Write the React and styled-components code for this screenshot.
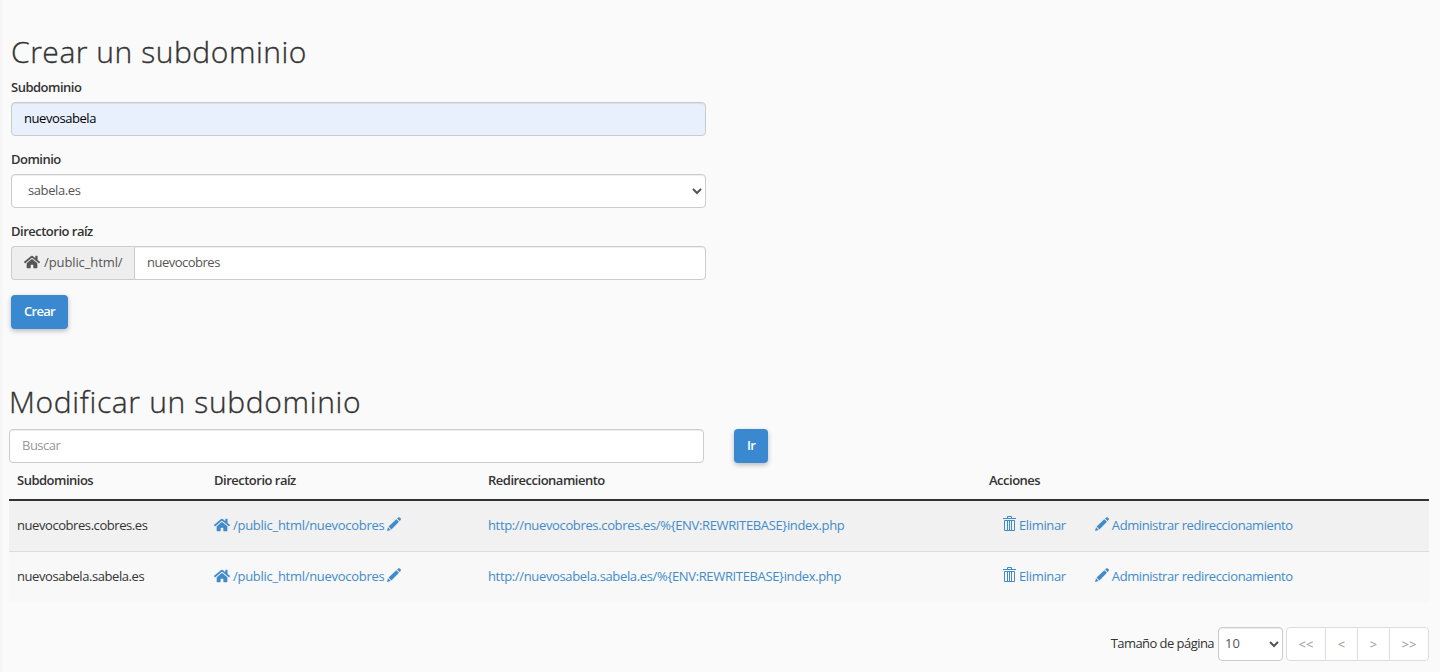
import React from 'react';
import styled, { createGlobalStyle, css } from 'styled-components';
import { FaHome } from 'react-icons/fa';

const Global = createGlobalStyle`
  *, *::before, *::after { box-sizing: border-box; }
  body {
    margin: 0;
    background: #fafafa;
    color: #333;
    font-family: 'Open Sans', 'Noto Sans', sans-serif;
    font-size: 13px;
    line-height: 20px;
    overflow: hidden;
  }
`;

const Page = styled.main`
  min-height: 672px;
  padding-top: 35px;
  box-shadow: inset 5px 0 4px -4px #f1f1f1;
`;

const CreateSection = styled.section`
  height: 350px;
  padding-left: 11px;
`;

const ManageSection = styled.section`
  width: 1420px;
  margin-left: 9px;
`;

const Heading = styled.h2`
  margin: 0;
  font-size: 30px;
  font-weight: 300;
  line-height: 34px;
  letter-spacing: ${(p) => p.$spacing}px;
  -webkit-text-stroke: 0.35px #333;
`;

const T = styled.span`
  letter-spacing: ${(p) => p.$ls ?? -0.43}px;
  white-space: nowrap;
`;

const Label = styled.label`
  display: block;
  height: 20px;
  font-weight: 600;
  white-space: nowrap;
  letter-spacing: -0.5px;
`;

const Field = styled.div`
  width: 695px;
  height: 72px;
  padding-top: 8px;

  ${Label} { margin-bottom: 5px; }
`;

const control = css`
  height: 34px;
  border: 1px solid #ccc;
  border-radius: 4px;
  background: #fff;
  color: #555;
  font: inherit;
  box-shadow: inset 0 1px 1px rgba(0, 0, 0, 0.075);
  outline: none;
`;

const Input = styled.input`
  ${control}
  display: block;
  width: 695px;
  padding: 5px 12px 7px;
  letter-spacing: ${(p) => p.$ls ?? -0.43}px;
  ${(p) => p.$filled && 'background: #e8f0fe; color: #000;'}

  &::placeholder { color: #999; opacity: 1; }
`;

const Select = styled.select`
  ${control}
  width: ${(p) => p.$width}px;
  padding: ${(p) => p.$padding};
  letter-spacing: ${(p) => p.$ls ?? -0.4}px;
`;

const InputGroup = styled.div`
  display: flex;

  ${Input} {
    flex: 1;
    min-width: 0;
    border-radius: 0 4px 4px 0;
  }
`;

const Addon = styled.span`
  display: flex;
  align-items: center;
  gap: 4px;
  width: 123px;
  height: 34px;
  padding: 0 0 2px 12px;
  border: 1px solid #ccc;
  border-right: 0;
  border-radius: 4px 0 0 4px;
  background: #eee;
  color: #555;
`;

const Button = styled.button`
  width: ${(p) => p.$width}px;
  height: 34px;
  padding: 0 0 2px;
  border: 0;
  border-radius: 4px;
  background: #3a89d0;
  color: #fff;
  font: inherit;
  font-weight: 600;
  letter-spacing: -0.7px;
  box-shadow: 0 2px 5px rgba(0, 0, 0, 0.26);
`;

const CreateButton = styled(Button)`
  display: block;
  margin-top: 10px;
`;

const SearchRow = styled.div`
  display: flex;
  gap: 30px;
  margin-top: 10px;
`;

const Table = styled.div`
  height: 140px;
`;

const Row = styled.div`
  display: grid;
  grid-template-columns: 197px 274px 501px 1fr;
  align-items: center;
  height: ${(p) => p.$height}px;
  padding: 0 8px 2px;
  background: ${(p) => p.$bg || 'transparent'};
  border-bottom: ${(p) => p.$border || '0'};
`;

const Link = styled.a`
  display: inline-flex;
  align-items: center;
  gap: 3px;
  color: #428bca;
  white-space: nowrap;
`;

const Actions = styled.div`
  display: flex;
  gap: 29px;
  padding-left: 14px;
`;

const Icon = styled.svg`
  display: block;
  flex: none;
  margin-top: -3px;
`;

const Pager = styled.div`
  display: flex;
  justify-content: flex-end;
  align-items: center;
  margin-top: 24px;
`;

const PageSize = styled.label`
  display: flex;
  align-items: center;
  gap: 4px;
  margin-right: 3px;

  ${T} { padding-bottom: 2px; }
`;

const PageButtons = styled.div`
  display: flex;
`;

const PageButton = styled.button`
  width: ${(p) => p.$width}px;
  height: 34px;
  margin-left: -1px;
  padding: 0;
  border: 1px solid #ddd;
  background: #fff;
  color: #999;
  font: inherit;

  &:first-child { margin-left: 0; border-radius: 4px 0 0 4px; }
  &:last-child { border-radius: 0 4px 4px 0; }
`;

const Pencil = () => (
  <Icon width="14" height="14" viewBox="0 0 14 14" fill="currentColor">
    <path d="M0 14 1 10.3 3.7 13Z" />
    <path d="M1.6 9.5 9.3 2.2 12 4.8 4.4 12.4Z" />
    <path d="M10 1.5 11.2.4Q12-.2 12.9.6L13.6 1.3Q14.3 2.1 13.6 2.9L12.6 4.1Z" />
  </Icon>
);

const Trash = () => (
  <Icon width="13" height="15" viewBox="0 0 13 15" fill="none" stroke="currentColor">
    <path d="M0 2.5H13M4.5 2V.5H8.5V2M1.5 4.5H11.5V14.5H1.5ZM4.5 5V14M6.5 5V14M8.5 5V14" />
  </Icon>
);

const rows = [
  { name: 'nuevocobres.cobres.es', bg: '#f1f1f1', border: '1px solid #ddd', height: 51 },
  { name: 'nuevosabela.sabela.es', bg: '#f8f8f8', height: 50 },
];

export default function App() {
  return (
    <>
      <Global />
      <Page>
        <CreateSection>
          <Heading $spacing={0.54}>Crear un subdominio</Heading>
          <Field>
            <Label>Subdominio</Label>
            <Input $filled defaultValue="nuevosabela" />
          </Field>
          <Field>
            <Label>Dominio</Label>
            <Select $width={695} $padding="5px 12px 7px"><option>sabela.es</option></Select>
          </Field>
          <Field>
            <Label>Directorio raíz</Label>
            <InputGroup>
              <Addon><FaHome size={16} /><T $ls={-0.1}>/public_html/</T></Addon>
              <Input $ls={-0.5} defaultValue="nuevocobres" />
            </InputGroup>
          </Field>
          <CreateButton $width={57}>Crear</CreateButton>
        </CreateSection>
        <ManageSection>
          <Heading $spacing={0.66}>Modificar un subdominio</Heading>
          <SearchRow>
            <Input $ls={-0.5} placeholder="Buscar" />
            <Button $width={34}>Ir</Button>
          </SearchRow>
          <Table>
            <Row $height={38} $border="2px solid #333">
              <Label>Subdominios</Label>
              <Label>Directorio raíz</Label>
              <Label>Redireccionamiento</Label>
              <Label>Acciones</Label>
            </Row>
            {rows.map((r) => (
              <Row key={r.name} $height={r.height} $bg={r.bg} $border={r.border}>
                <T>{r.name}</T>
                <Link><FaHome size={16} /><T $ls={-0.28}>/public_html/nuevocobres</T><Pencil /></Link>
                <Link><T $ls={-0.35}>{`http://${r.name}/%{ENV:REWRITEBASE}index.php`}</T></Link>
                <Actions>
                  <Link><Trash /><T $ls={-0.35}>Eliminar</T></Link>
                  <Link><Pencil /><T $ls={-0.41}>Administrar redireccionamiento</T></Link>
                </Actions>
              </Row>
            ))}
          </Table>
          <Pager>
            <PageSize>
              <T $ls={-0.55}>Tamaño de página</T>
              <Select $width={65} $ls={0} $padding="5px 2px 7px"><option>10</option></Select>
            </PageSize>
            <PageButtons>
              <PageButton $width={40}>&lt;&lt;</PageButton>
              <PageButton $width={33}>&lt;</PageButton>
              <PageButton $width={33}>&gt;</PageButton>
              <PageButton $width={40}>&gt;&gt;</PageButton>
            </PageButtons>
          </Pager>
        </ManageSection>
      </Page>
    </>
  );
}
